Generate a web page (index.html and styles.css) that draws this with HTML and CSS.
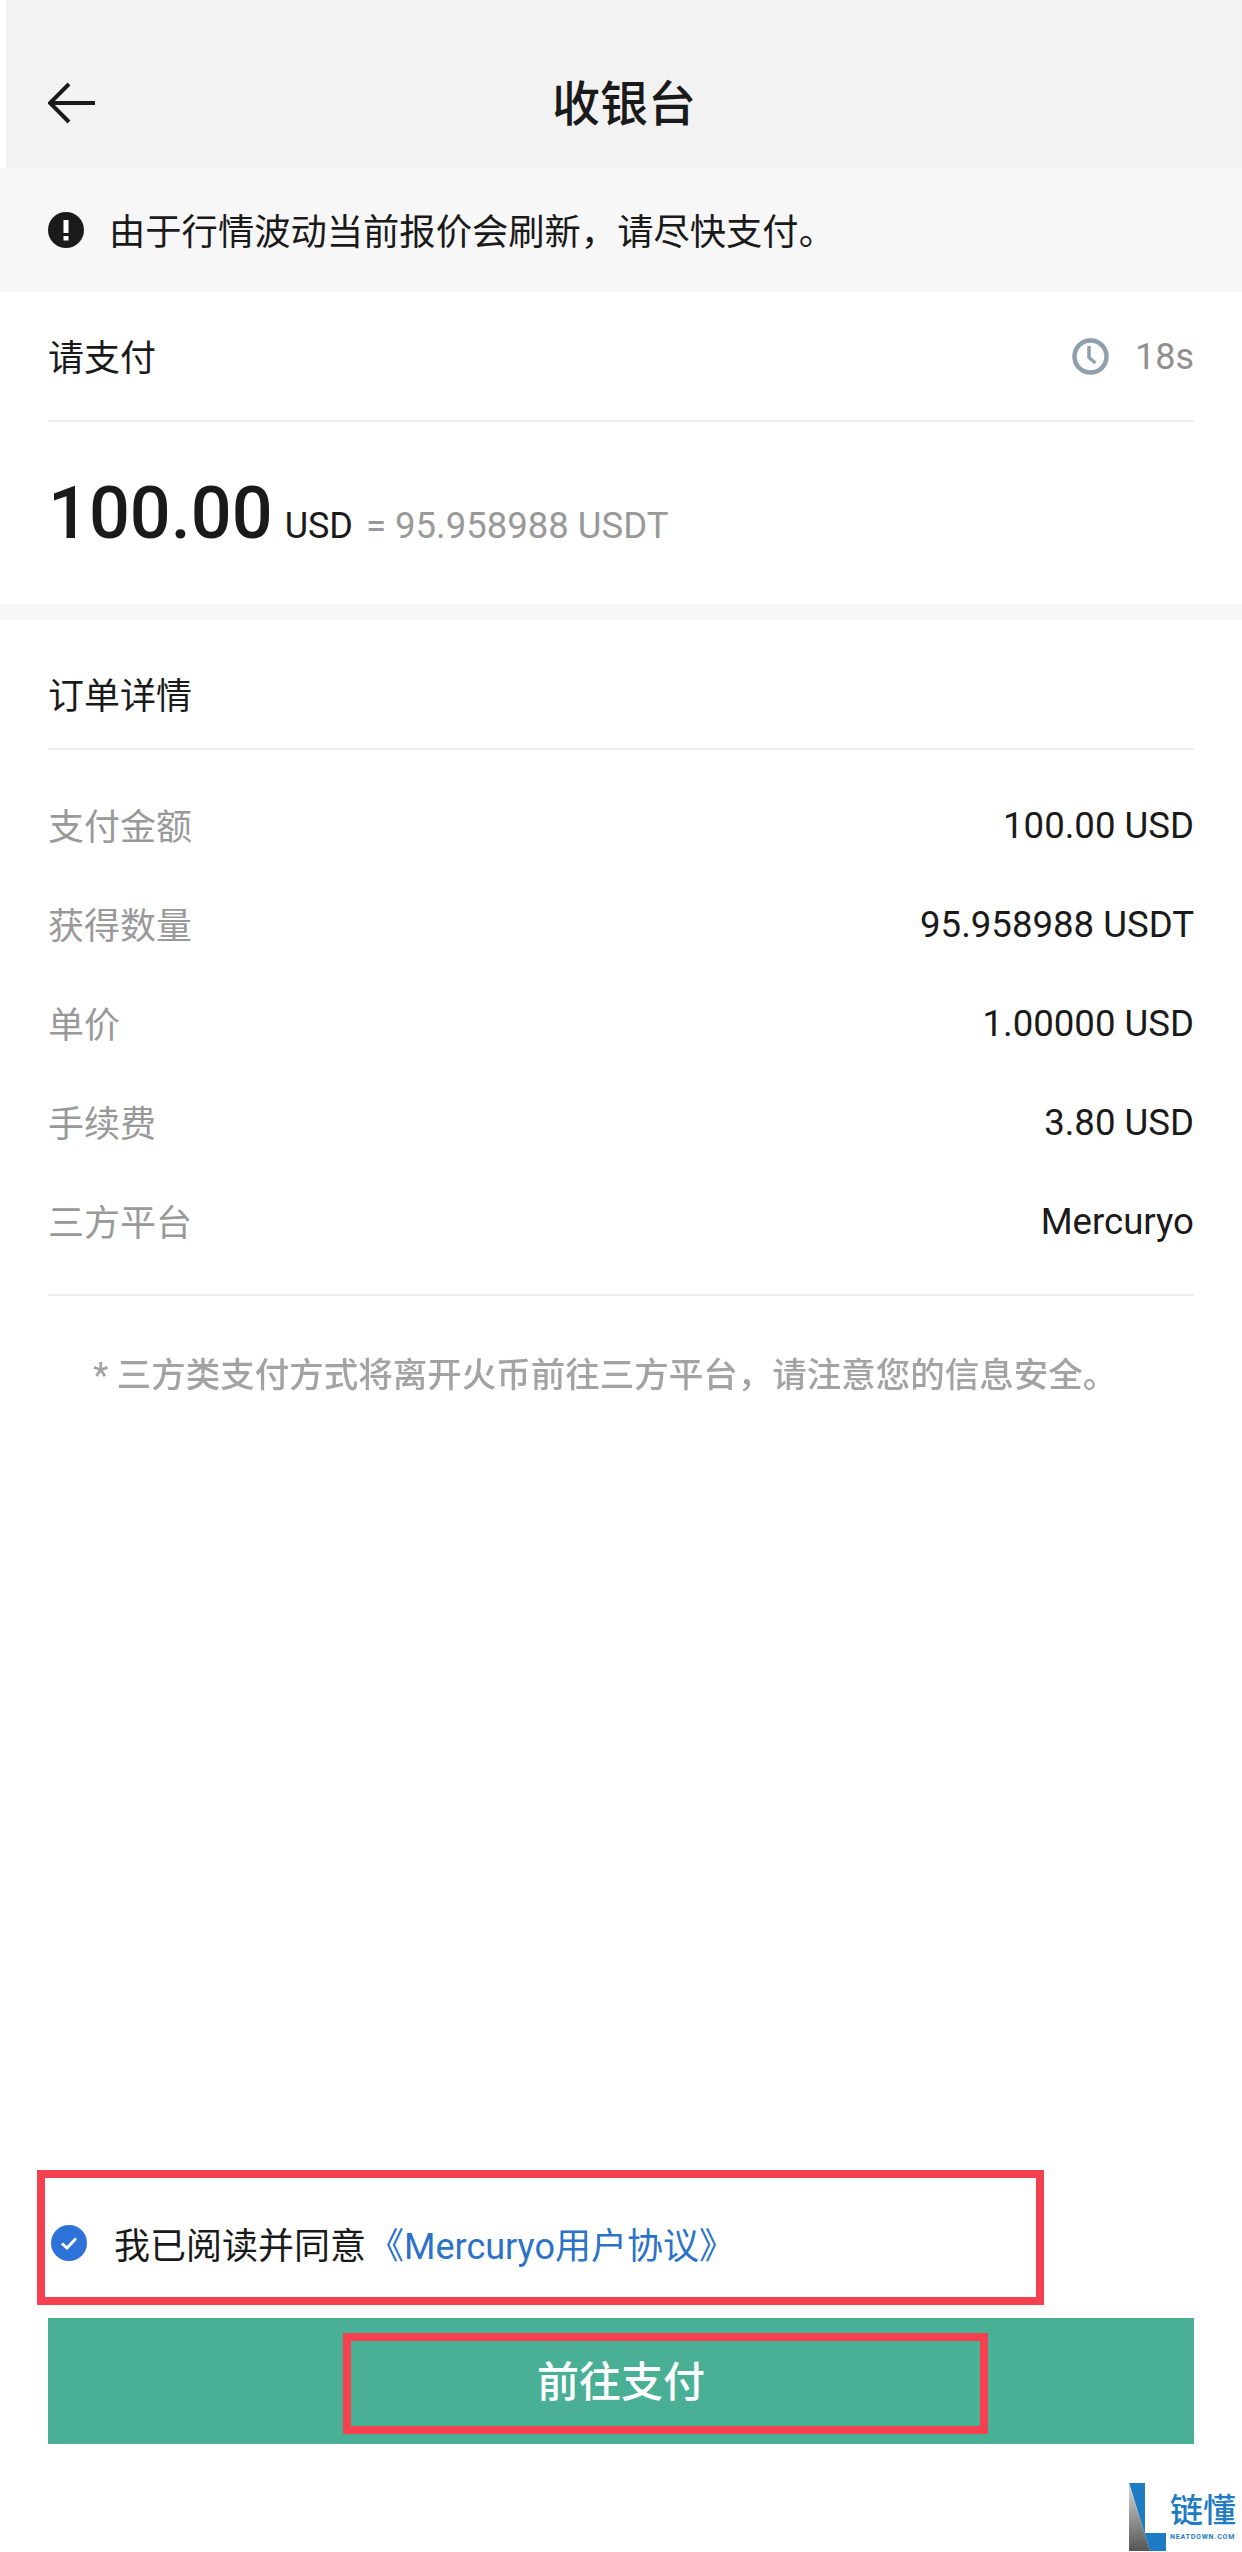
FILE: index.html
```html
<!DOCTYPE html>
<html>
<head>
    <title>收银台</title>
    <link rel="stylesheet" href="styles.css">
</head>
<body>

<div class="page">
    <div class="nav">
        <svg class="back" width="48" height="44" viewBox="0 0 48 44">
            <path d="M2 22H47M21 3L2 22L21 41" fill="none" stroke="#1a1a1a" stroke-width="4"/>
        </svg>
        <h1>收银台</h1>
    </div>

    <div class="notice">
        <svg width="36" height="36" viewBox="0 0 36 36">
            <circle cx="18" cy="18" r="18" fill="#1a1a1a"/>
            <rect x="15.5" y="8" width="5" height="13" fill="#fff"/>
            <rect x="15.5" y="24" width="5" height="4.5" fill="#fff"/>
        </svg>
        <span class="notice-text">由于行情波动当前报价会刷新&#65292;请尽快支付。</span>
    </div>

    <div class="section pay">
        <div class="head">
            <span class="head-title">请支付</span>
            <span class="timer">
                <svg width="37" height="37" viewBox="0 0 37 37">
                    <circle cx="18.5" cy="18.5" r="16" fill="none" stroke="#8fa0ad" stroke-width="4.5"/>
                    <path d="M17 8V19.5L23.5 25" fill="none" stroke="#8fa0ad" stroke-width="3.5"/>
                </svg>
                <span class="timer-text">18s</span>
            </span>
        </div>
        <div class="amount">
            <span class="big">100.00</span>
            <span class="unit">USD</span>
            <span class="convert">= 95.958988 USDT</span>
        </div>
    </div>

    <div class="section order">
        <div class="head">
            <span class="head-title">订单详情</span>
        </div>
        <div class="rows">
            <div class="row"><span class="label">支付金额</span><span class="value">100.00 USD</span></div>
            <div class="row"><span class="label">获得数量</span><span class="value">95.958988 USDT</span></div>
            <div class="row"><span class="label">单价</span><span class="value">1.00000 USD</span></div>
            <div class="row"><span class="label">手续费</span><span class="value">3.80 USD</span></div>
            <div class="row"><span class="label">三方平台</span><span class="value">Mercuryo</span></div>
        </div>
        <p class="tip">* 三方类支付方式将离开火币前往三方平台&#65292;请注意您的信息安全。</p>
    </div>

    <div class="footer">
        <div class="agree">
            <svg width="36" height="36" viewBox="0 0 36 36">
                <circle cx="18" cy="18" r="18" fill="#2d72d9"/>
                <path d="M11 18.5L16 23L25 13.5" fill="none" stroke="#fff" stroke-width="3"/>
            </svg>
            <span>我已阅读并同意</span>
            <a class="link">《Mercuryo用户协议》</a>
            <div class="mark mark-agree"></div>
        </div>
        <div class="btn">
            <span class="btn-text">前往支付</span>
            <div class="mark mark-btn"></div>
        </div>
    </div>

    <div class="logo">
        <svg width="38" height="69" viewBox="0 0 38 69">
            <defs>
                <linearGradient id="logoGrey" x1="0" y1="0" x2="0" y2="1">
                    <stop offset="0" stop-color="#d8d8d8"/>
                    <stop offset="1" stop-color="#555"/>
                </linearGradient>
            </defs>
            <path d="M0 0H16V50H37V68H21Z" fill="#1e7cc4"/>
            <path d="M0 0L21 68H0Z" fill="url(#logoGrey)"/>
        </svg>
        <div class="logo-text">
            <div class="logo-cn">链懂</div>
            <div class="logo-en">NEATDOWN.COM</div>
        </div>
    </div>
</div>

</body>
</html>
```

FILE: styles.css
```css
body {
    margin: 0;
    padding: 0;
    background-color: #fff;
    font-family: Roboto, "Noto Sans CJK SC", sans-serif;
    font-size: 36px;
    color: #1a1a1a;
}

.page {
    position: relative;
    width: 1242px;
    height: 2552px;
    overflow: hidden;
    display: flex;
    flex-direction: column;
}

.nav {
    position: relative;
    height: 168px;
    margin-left: 6px;
    background-color: #f2f2f2;
    display: flex;
    align-items: center;
    justify-content: center;
    padding-top: 42px;
    box-sizing: border-box;
}

.nav h1 {
    margin: 0;
    font-size: 48px;
    font-weight: 500;
    line-height: 60px;
}

.back {
    position: absolute;
    left: 42px;
    top: 81px;
}

.notice {
    height: 124px;
    background-color: #f7f7f7;
    display: flex;
    align-items: center;
    gap: 25px;
    padding-left: 48px;
}

.notice-text {
    margin-top: -2px;
    font-size: 36.3px;
}

.section {
    padding: 0 48px;
}

.pay {
    height: 328px;
    box-sizing: border-box;
    border-bottom: 16px solid #f7f7f7;
}

.head {
    height: 130px;
    display: flex;
    align-items: center;
    justify-content: space-between;
    border-bottom: 2px solid #f0f0f0;
    box-sizing: border-box;
}

.head-title {
    margin-top: -3px;
}

.timer {
    display: flex;
    align-items: center;
    gap: 26px;
    color: #909090;
}

.timer-text {
    margin-top: 2px;
}

.amount {
    display: flex;
    align-items: baseline;
    padding-top: 52px;
}

.big {
    font-size: 72px;
    font-weight: 500;
    line-height: 80px;
}

.unit {
    margin-left: 12px;
}

.convert {
    margin-left: 13px;
    font-size: 36.5px;
    color: #999;
}

.order .head {
    height: 130px;
    padding-top: 20px;
}

.rows {
    padding: 26px 0 23px;
    border-bottom: 2px solid #f0f0f0;
}

.row {
    height: 99px;
    display: flex;
    align-items: center;
    justify-content: space-between;
}

.label {
    margin-top: -3px;
    color: #999;
}

.value {
    font-size: 36.6px;
}

.tip {
    margin: 49px 0 0 45px;
    font-size: 34.5px;
    font-weight: 500;
    line-height: 60px;
    color: #a3a3a3;
    white-space: nowrap;
    filter: blur(0.7px);
}

.footer {
    margin-top: auto;
    padding: 0 48px 108px;
}

.agree {
    position: relative;
    display: flex;
    align-items: center;
    height: 50px;
    padding-left: 3px;
    margin-bottom: 50px;
}

.agree span {
    margin-left: 27px;
}

.link {
    color: #2c72c8;
    margin-left: 2px;
}

.btn {
    position: relative;
    height: 126px;
    background-color: #49b096;
    color: #fff;
    font-size: 42px;
    font-weight: 500;
    display: flex;
    align-items: center;
    justify-content: center;
}

.btn-text {
    margin-top: -6px;
}

/* red annotation frames drawn over the screenshot */
.mark {
    position: absolute;
    border: 8px solid #f5414f;
    box-sizing: border-box;
}

.mark-agree {
    left: -11px;
    top: -48px;
    width: 1007px;
    height: 135px;
}

.mark-btn {
    left: 295px;
    top: 15px;
    width: 645px;
    height: 101px;
}

.logo {
    position: absolute;
    left: 1129px;
    top: 2483px;
    display: flex;
    gap: 3px;
    color: #1e7cc4;
}

.logo-text {
    padding-top: 8px;
}

.logo-cn {
    font-size: 33px;
    line-height: 40px;
    font-weight: 500;
    white-space: nowrap;
}

.logo-en {
    font-size: 7px;
    line-height: 12px;
    font-weight: 700;
    letter-spacing: 0.8px;
    white-space: nowrap;
}
```
